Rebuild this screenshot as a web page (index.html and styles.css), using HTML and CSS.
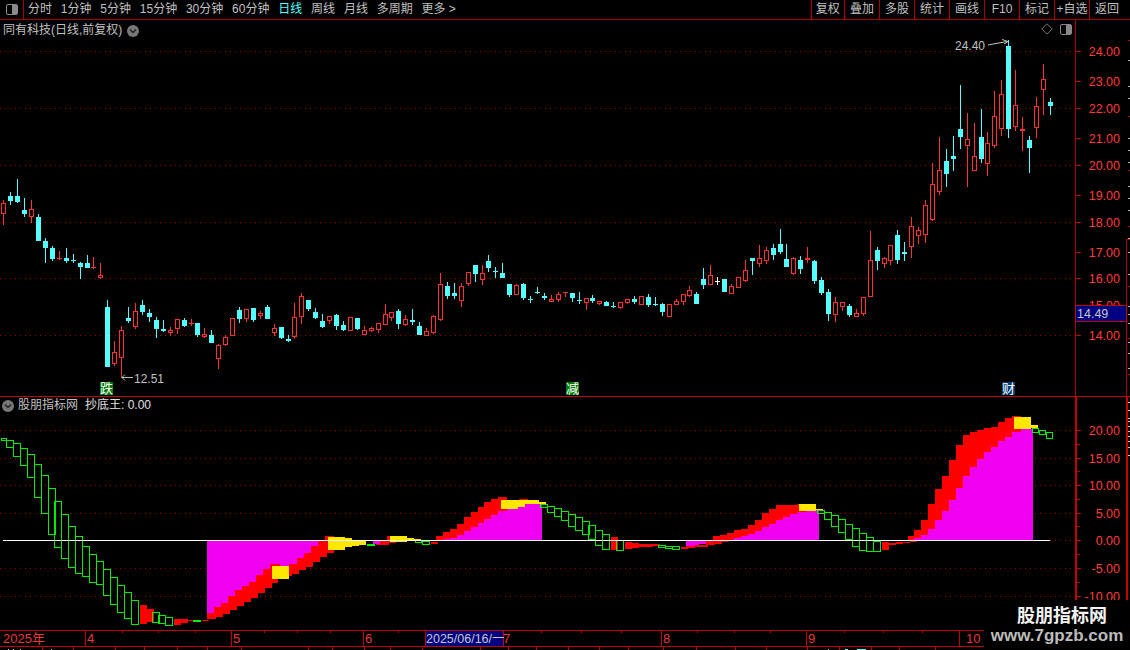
FILE: index.html
```html
<!DOCTYPE html>
<html lang="zh-CN">
<head>
<meta charset="utf-8">
<title>同有科技 日线</title>
<link rel="stylesheet" href="styles.css">
</head>
<body>
<div class="page">
  <header class="toolbar">
    <div class="panel-cell"><span class="panel-icon"><i></i></span></div>
    <nav class="periods">
      <span>分时</span><span>1分钟</span><span>5分钟</span><span>15分钟</span><span>30分钟</span><span>60分钟</span>
      <span class="active">日线</span><span>周线</span><span>月线</span><span>多周期</span><span>更多 &gt;</span>
    </nav>
    <div class="tools">
      <span>复权</span><span>叠加</span><span>多股</span><span>统计</span><span>画线</span><span>F10</span><span>标记</span><span>+自选</span><span>返回</span>
    </div>
  </header>
  <section class="pane pane-price">
    <svg id="price" class="chart" width="1130" height="377" viewBox="0 20 1130 377"></svg>
    <div class="pane-title">
      <span>同有科技(日线,前复权)</span>
      <span class="chevron"><svg width="12" height="12" viewBox="0 0 12 12"><circle cx="6" cy="6" r="6" fill="#777"/><path d="M3 4.5 6 7.5 9 4.5" fill="none" stroke="#222" stroke-width="1.4"/></svg></span>
    </div>
    <div class="pane-tools">
      <svg width="12" height="12" viewBox="0 0 12 12"><path d="M6 .8 11.2 6 6 11.2 .8 6Z" fill="none" stroke="#777"/></svg>
      <span class="panel-icon"><i></i></span>
    </div>
  </section>
  <section class="pane pane-ind">
    <svg id="indicator" class="chart" width="1130" height="233" viewBox="0 397 1130 233"></svg>
    <div class="pane-title ind-title">
      <span class="chevron"><svg width="12" height="12" viewBox="0 0 12 12"><circle cx="6" cy="6" r="6" fill="#777"/><path d="M3 4.5 6 7.5 9 4.5" fill="none" stroke="#222" stroke-width="1.4"/></svg></span>
      <span>股朋指标网</span>
      <span class="ind-value">抄底王: 0.00</span>
    </div>
  </section>
  <svg id="dates" class="chart" width="1130" height="20" viewBox="0 630 1130 20"></svg>
  <aside class="watermark">
    <strong>股朋指标网</strong>
    <span>www.7gpzb.com</span>
  </aside>
</div>
<script src="chart.js"></script>
</body>
</html>
```
FILE: styles.css
```css
* { box-sizing: border-box; }
html, body { margin: 0; height: 100%; background: #000; overflow: hidden; }
body { font-family: "Liberation Sans", "Noto Sans CJK SC", sans-serif; font-size: 12px; color: #c0c0c0; }
.page { position: relative; width: 1130px; height: 650px; display: flex; flex-direction: column; background: #000; }

.toolbar { height: 20px; flex: none; display: flex; align-items: stretch; border-bottom: 1px solid #a80000; }
.panel-cell { width: 24px; display: flex; align-items: center; justify-content: center; border-right: 1px solid #a80000; }
.panel-icon { display: block; width: 12px; height: 11px; border: 1px solid #8a8a8a; border-radius: 2px; position: relative; }
.panel-icon i { display: block; position: absolute; right: 0; top: 0; bottom: 0; width: 5px; background: #8a8a8a; }
.periods { display: flex; align-items: center; gap: 8.8px; padding-left: 4px; flex: 1; line-height: 19px; white-space: nowrap; }
.periods .active { color: #54ffff; }
.tools { display: flex; align-items: stretch; width: 319.5px; }
.tools span { width: 35px; flex: none; border-left: 1px solid #a80000; text-align: center; line-height: 19px; white-space: nowrap; }
.tools span:first-child { width: 33.5px; }
.tools span:last-child { width: 41px; padding-right: 6px; }

.pane { position: relative; flex: none; }
.pane-price { height: 377px; }
.pane-ind { height: 233px; }
.chart { display: block; flex: none; }
.chart text { font-family: "Liberation Sans", "Noto Sans CJK SC", sans-serif; }

.pane-title { position: absolute; left: 3px; top: 2px; display: flex; align-items: center; gap: 5px; line-height: 17px; white-space: nowrap; }
.chevron { display: block; height: 12px; }
.chevron svg { display: block; }
.pane-tools { position: absolute; left: 1041px; top: 3px; display: flex; align-items: center; gap: 7px; }
.pane-tools svg { display: block; }
.ind-title { left: 2px; top: 0; gap: 4px; }
.ind-value { margin-left: 3px; color: #e0e0e0; }

.t-axis { font-size: 12.5px; fill: #ff3c3c; }
.t-note { font-size: 12px; fill: #c0c0c0; }
.t-mark { font-size: 13px; fill: #fff; }
.t-date { font-size: 13px; fill: #e83838; }
.t-cur { font-size: 12.5px; fill: #c8c8c8; }

.watermark { position: absolute; left: 984px; top: 600px; width: 146px; height: 50px; background: #000; display: flex; flex-direction: column; align-items: center; }
.watermark strong { font-size: 18px; line-height: 24px; margin-top: 2px; color: #f4f4f4; font-family: "Noto Sans CJK SC", sans-serif; margin-left: 10px; }
.watermark span { font-size: 17px; line-height: 20px; font-weight: 700; color: #bcbcbc; white-space: nowrap; }
```
FILE: chart.js
```js
var NS = 'http://www.w3.org/2000/svg';
var RED = '#ff3232', CYAN = '#54ffff', LINE = '#a80000', LINE2 = '#c40000', GRID = '#a00000';

function el(parent, name, attrs, txt) {
  var e = document.createElementNS(NS, name);
  for (var k in attrs) e.setAttribute(k, attrs[k]);
  if (txt !== undefined) e.textContent = txt;
  parent.appendChild(e);
  return e;
}
function box(p, x0, x1, y0, y1, c) {
  el(p, 'rect', { x: x0, y: y0, width: x1 - x0, height: Math.max(y1 - y0, 1), fill: c, 'shape-rendering': 'crispEdges' });
}
function frame(p, x0, x1, y0, y1, c) {
  el(p, 'rect', { x: x0 + .5, y: y0 + .5, width: x1 - x0 - 1, height: Math.max(y1 - y0 - 1, 0), fill: 'none', stroke: c, 'shape-rendering': 'crispEdges' });
}
function dots(p, x0, x1, y) {
  el(p, 'line', { x1: x0, x2: x1, y1: y + .5, y2: y + .5, stroke: GRID, 'stroke-dasharray': '1 4', 'shape-rendering': 'crispEdges' });
}
function label(p, x, y, s, cls, anchor) {
  el(p, 'text', { x: x, y: y, 'class': cls, 'text-anchor': anchor || 'start' }, s);
}

/* type, high, body top, body bottom, low (pixel rows) */
var K = [
'r,200,203,214,225','c,192,196,201,205','c,179,196,202,203','c,198,210,214,217','r,200,209,217,223','c,214,217,241,241','c,238,241,248,263','c,246,248,259,261','r,251,258,259,260','c,248,258,261,263',
'c,254,260,261,263','c,262,263,267,279','c,255,263,268,268','r,257,267,268,269','r,263,275,278,279','c,300,307,367,367','r,341,352,364,366','r,326,330,358,378','c,307,318,321,323','r,303,311,327,329',
'c,300,305,312,315','c,309,313,317,322','c,317,320,329,338','c,320,329,331,332','r,327,330,333,336','r,319,319,329,334','c,318,320,326,327','r,319,323,324,326','c,323,323,335,337','r,328,334,337,338',
'c,330,335,343,343','r,344,345,359,369','r,335,337,345,346','r,318,318,336,336','c,307,310,319,323','r,309,309,319,322','c,308,308,320,322','r,311,313,316,319','c,305,307,319,319','r,324,328,333,336',
'c,327,327,338,339','c,335,339,341,342','r,303,317,337,339','r,293,296,317,324','c,300,300,309,311','c,308,312,318,319','c,314,321,327,328','r,316,316,321,324','c,314,315,326,330','c,321,325,330,331',
'r,317,317,331,331','c,318,318,329,330','r,326,330,335,335','r,327,328,331,332','r,323,323,330,333','r,304,314,325,325','r,312,312,318,321','c,309,311,324,329','r,315,319,325,326','c,309,320,322,325',
'c,322,326,335,335','r,328,331,336,336','r,315,316,333,334','r,273,284,320,321','c,282,286,296,299','c,283,293,296,299','r,283,286,301,307','r,272,272,284,286','c,265,265,274,282','r,265,273,280,285',
'c,255,261,268,272','c,267,271,272,278','c,263,273,278,278','c,284,284,295,297','r,284,285,295,295','c,283,284,298,300','c,296,299,300,303','c,287,292,293,294','c,293,296,298,300','r,295,299,302,302',
'r,292,294,300,302','r,292,292,293,297','c,293,293,298,302','c,292,300,301,304','r,298,298,303,310','c,295,298,301,303','r,301,301,304,305','c,301,302,306,306','c,302,306,307,308','r,302,302,308,309',
'r,299,299,303,304','c,296,299,302,304','r,296,296,305,305','c,294,297,305,307','c,297,304,305,306','c,303,304,312,316','r,304,304,317,317','r,299,301,305,305','r,294,294,302,305','r,286,290,296,297',
'c,292,294,304,304','c,268,279,285,289','r,265,275,285,285','w,277,281,282,285','c,279,279,292,292','r,284,286,294,294','r,277,277,288,288','r,260,270,281,282','c,258,258,261,275','r,245,258,264,267',
'r,247,250,261,264','c,244,248,255,260','c,229,244,252,254','c,244,259,267,267','r,257,258,274,275','c,256,260,269,274','r,247,258,260,263','c,260,261,281,284','c,277,280,293,295','c,289,292,314,321',
'r,297,302,315,322','r,302,302,307,311','c,304,306,315,317','r,309,313,317,317','r,297,297,314,316','r,231,260,297,297','c,247,250,261,270','r,257,258,264,268','r,245,245,261,265','c,230,235,260,264',
'c,242,252,254,261','r,217,226,247,258','r,227,230,236,244','r,200,205,235,243','r,163,184,220,221','r,137,170,192,195','c,149,161,174,187','c,136,156,159,171','c,85,129,137,149','r,113,139,146,187',
'r,123,156,171,171','c,109,137,159,163','r,132,143,164,176','r,91,116,146,148','r,80,94,129,136','c,40,46,129,138','r,70,105,127,131','r,117,129,131,151','c,136,140,148,173','r,97,106,128,138',
'r,64,79,90,115','c,98,102,106,115'
];

function candle(p, i, s) {
  var a = s.split(','), t = a[0], hi = +a[1], top = +a[2], bot = +a[3], lo = +a[4];
  var cx = Math.round(3.4 + 6.93 * i), c = t === 'r' ? RED : t === 'c' ? CYAN : '#fff';
  if (t === 'r' && bot - top > 2) {
    if (top > hi) box(p, cx, cx + 1, hi, top, c);
    if (lo > bot) box(p, cx, cx + 1, bot, lo, c);
    frame(p, cx - 2, cx + 3, top, bot, c);
  } else {
    box(p, cx, cx + 1, hi, lo, c);
    box(p, cx - 2, cx + 3, top, Math.max(bot, top + 1), c);
  }
}

function drawPrice() {
  var p = document.getElementById('price');
  [51, 108, 165, 222, 278, 335].forEach(function (y) { dots(p, 0, 1075, y); });
  K.forEach(function (s, i) { candle(p, i, s); });

  box(p, 1075, 1076, 20, 397, LINE);
  box(p, 1126, 1127, 240, 397, LINE);
  box(p, 0, 1130, 396, 397, LINE2);

  [[24, 51], [23, 81], [22, 108], [21, 138], [20, 165], [19, 195], [18, 222], [17, 252], [16, 278], [14, 335]].forEach(function (a) {
    box(p, 1076, 1081, a[1], a[1] + 1, LINE2);
    label(p, 1120, a[1] + 5, a[0].toFixed(2), 't-axis', 'end');
  });
  box(p, 1126, 1130, 239, 240, LINE);
  [20, 40, 66, 78, 96, 118, 130, 142, 150, 166, 178, 190, 206, 218, 232, 254, 266, 286, 294, 303, 318, 322, 333, 348, 354].forEach(function (y, i) {
    box(p, 1128, 1130, y + 20, y + 21, i % 4 ? '#b8b8b8' : LINE2);
  });

  /* last price flag over the axis */
  label(p, 1120, 310, '15.00', 't-axis', 'end');
  box(p, 1076, 1126, 306, 321, '#000080');
  frame(p, 1075, 1127, 305, 322, LINE2);
  label(p, 1077, 318, '14.49', 't-cur');

  /* high / low notes */
  label(p, 955, 50, '24.40', 't-note');
  el(p, 'path', { d: 'M988 45 1007 41.5M1002 39.5 1008 41.5 1004 44', fill: 'none', stroke: '#c0c0c0' });
  label(p, 134, 383, '12.51', 't-note');
  el(p, 'path', { d: 'M133 377.5H122M125 374.5 122 377.5 125 380.5', fill: 'none', stroke: '#c0c0c0' });

  /* event markers */
  [[100, '跌', '#007a00'], [566, '减', '#007a00'], [1002, '财', '#003a70']].forEach(function (m) {
    box(p, m[0], m[0] + 13, 382, 395, m[2]);
    label(p, m[0] + 6.5, 393, m[1], 't-mark', 'middle');
  });
}

var REDS = [
[140,147,605,624],[147,154,609,622],[174,181,619,625],[181,188,619,623],[188,193,620,621],[202,209,620,621],
[207,216,613,619],[214,223,607,617],[221,230,603,614],[228,237,596,610],[235,244,590,606],[242,251,586,602],[249,258,582,598],[256,265,575,593],[263,272,569,588],[269,278,564,583],[276,292,564,576],[289,299,564,574],[297,306,558,570],[304,313,553,567],[311,320,546,562],[318,327,541,557],[325,334,536,553],
[376,389,541,545],[387,390,536,540],[389,396,541,543],[431,438,542,544],
[436,445,536,540],[443,452,532,540],[450,459,529,539],[457,466,524,536],[464,473,517,531],[471,480,512,527],[478,487,507,523],[484,493,502,519],[491,500,499,515],[498,507,497,511],[519,528,499,501],
[611,618,537,550],[625,632,542,549],[632,639,543,548],[639,646,544,547],[646,653,544,547],[653,660,544,546],[681,688,547,549],
[686,695,546,548],[695,708,545,547],[706,715,541,545],[715,722,541,544],[722,729,541,542],
[713,720,536,540],[720,727,535,540],[727,736,533,540],[734,743,530,538],[741,750,529,536],[748,757,525,534],[755,764,520,531],[762,771,513,527],[769,778,509,524],[776,785,505,520],[783,792,505,517],[790,799,505,514],[797,806,504,512],
[882,889,542,550],[889,896,543,545],[896,903,542,544],[903,910,542,543],[910,917,541,542],
[908,915,536,540],[914,923,530,538],[921,930,520,535],[928,937,504,529],[935,944,489,520],[942,951,476,511],[949,958,460,500],[956,965,445,488],[963,972,435,476],[970,979,432,467],[977,986,430,459],[984,993,428,452],[991,1000,427,447],[998,1007,422,441],[1005,1014,418,437],[1012,1021,416,432]
];
/* magenta columns above the zero line: x0, x1, top */
var MAG_UP = [
[443,450,539],[450,457,538],[457,464,535],[464,471,531],[471,478,527],[478,484,523],[484,491,519],[491,498,515],[498,507,511],[507,518,509],[518,525,507],[525,532,504],[532,542,504],
[734,741,538],[741,748,536],[748,755,534],[755,762,531],[762,769,527],[769,776,524],[776,783,520],[783,790,517],[790,797,514],[797,806,512],[806,819,510],
[914,921,538],[921,928,535],[928,935,529],[935,942,520],[942,949,511],[949,956,500],[956,963,488],[963,970,476],[970,977,467],[977,984,459],[984,991,452],[991,998,447],[998,1005,441],[1005,1012,437],[1012,1021,432],[1021,1033,429]
];
/* below the zero line: x0, x1, bottom */
var MAG_DN = [
[207,214,613],[214,221,607],[221,228,603],[228,235,596],[235,242,590],[242,249,586],[249,256,582],[256,263,575],[263,270,569],[270,280,564],[280,289,566],[289,297,564],[297,304,558],[304,311,553],[311,318,546],
[373,380,544],[686,695,546],[695,699,545],[699,706,544]
];
var YEL = [
[272,289,566,579],[328,345,537,550],[345,352,538,547],[352,359,541,546],[359,366,541,545],[390,407,536,542],[407,414,538,540],[414,421,539,540],
[501,518,500,509],[518,525,500,507],[525,532,500,504],[532,539,500,504],[539,546,502,504],
[799,816,504,511],[816,823,509,510],[1014,1031,417,429],[1031,1038,425,428]
];
var GRN = [
[1,8,438,441],[6,15,440,448],[13,22,443,457],[20,29,448,466],[27,36,454,478],[34,43,464,498],[41,50,475,514],[48,57,488,535],[54,63,501,548],[61,70,514,559],[68,77,526,568],[75,84,536,574],[82,91,546,577],[89,98,554,583],[96,105,561,585],[103,112,569,596],[110,119,577,605],[117,126,585,613],[124,133,592,619],[131,140,600,625],
[152,161,612,623],[158,167,615,624],[165,174,617,626],[193,202,620,622],[367,376,544,546],[415,423,540,543],[422,431,541,545],
[540,549,504,508],[547,556,506,513],[554,563,508,517],[561,570,511,521],[568,577,514,527],[575,584,517,531],[582,591,521,535],[588,597,525,540],[595,604,530,546],[602,611,534,550],[616,625,540,551],
[658,667,545,548],[665,674,546,549],[672,681,546,550],
[817,826,510,514],[824,833,512,520],[831,840,515,527],[838,847,519,533],[845,854,524,540],[852,861,528,547],[859,868,533,551],[866,875,537,552],[873,882,541,552],
[1032,1040,428,433],[1039,1047,430,435],[1046,1054,432,439]
];

function drawIndicator() {
  var p = document.getElementById('indicator');
  [430, 458, 485, 513, 568, 596].forEach(function (y) { dots(p, 0, 1075, y); });
  REDS.forEach(function (r) { box(p, r[0], r[1], r[2], r[3], '#ff0000'); });
  MAG_UP.forEach(function (r) { box(p, r[0], r[1], r[2], 540, '#f000f0'); });
  MAG_DN.forEach(function (r) { box(p, r[0], r[1], 541, r[2], '#f000f0'); });
  YEL.forEach(function (r) { box(p, r[0], r[1], r[2], r[3], '#ffe800'); });
  GRN.forEach(function (r) { frame(p, r[0], r[1] - 1, r[2], r[3], '#00f000'); });
  box(p, 3, 1050, 540, 541, '#ffffff');
  dots(p, 1050, 1075, 540);

  box(p, 1075, 1077, 397, 630, LINE2);
  box(p, 1126, 1128, 397, 630, LINE2);
  [[20, 430], [15, 458], [10, 485], [5, 513], [0, 540], [-5, 568], [-10, 596]].forEach(function (a) {
    box(p, 1077, 1081, a[1], a[1] + 1, LINE2);
    label(p, 1120, a[1] + 5, a[0].toFixed(2), 't-axis', 'end');
  });
  [444, 471, 499, 526, 554, 582].forEach(function (y) { box(p, 1077, 1080, y, y + 1, LINE); });
  [402, 410, 418, 421, 426, 431, 436, 441, 447, 455].forEach(function (y) { box(p, 1128, 1130, y, y + 1, '#c8c8c8'); });
}

function drawDates() {
  var p = document.getElementById('dates');
  box(p, 0, 1130, 630, 631, LINE2);
  box(p, 0, 1130, 646, 647, LINE2);
  [122, 158, 195, 264, 297, 330, 398, 541, 581, 621, 697, 734, 770, 844, 883, 922].forEach(function (x) { box(p, x, x + 1, 631, 633, LINE2); });
  [85, 231, 363, 806, 661, 959].forEach(function (x) { box(p, x, x + 1, 631, 646, LINE2); });
  [42, 73, 115, 144, 177, 207, 241, 308, 332, 364, 390, 422, 480, 508, 536, 568, 599, 628, 663, 696, 735, 766, 807, 839, 871, 899, 935].forEach(function (x) { box(p, x, x + 1, 647, 650, LINE2); });
  [8, 13, 20, 51].forEach(function (x) { box(p, x, x + 1, 649, 650, '#d0d0d0'); });
  [828].forEach(function (x) { box(p, x, x + 1, 649, 650, '#d0d0d0'); });
  [[845, 848], [857, 866]].forEach(function (r) { box(p, r[0], r[1], 649, 650, CYAN); });

  label(p, 3, 643, '2025年', 't-date');
  label(p, 87, 643, '4', 't-date');
  label(p, 233, 643, '5', 't-date');
  label(p, 365, 643, '6', 't-date');
  label(p, 503, 643, '7', 't-date');
  label(p, 663, 643, '8', 't-date');
  label(p, 808, 643, '9', 't-date');
  label(p, 966, 643, '10', 't-date');
  box(p, 425, 503, 631, 646, '#000080');
  box(p, 425, 426, 631, 646, LINE2);
  box(p, 503, 504, 631, 646, LINE2);
  label(p, 426, 643, '2025/06/16/一', 't-cur');
}

drawPrice();
drawIndicator();
drawDates();
```
